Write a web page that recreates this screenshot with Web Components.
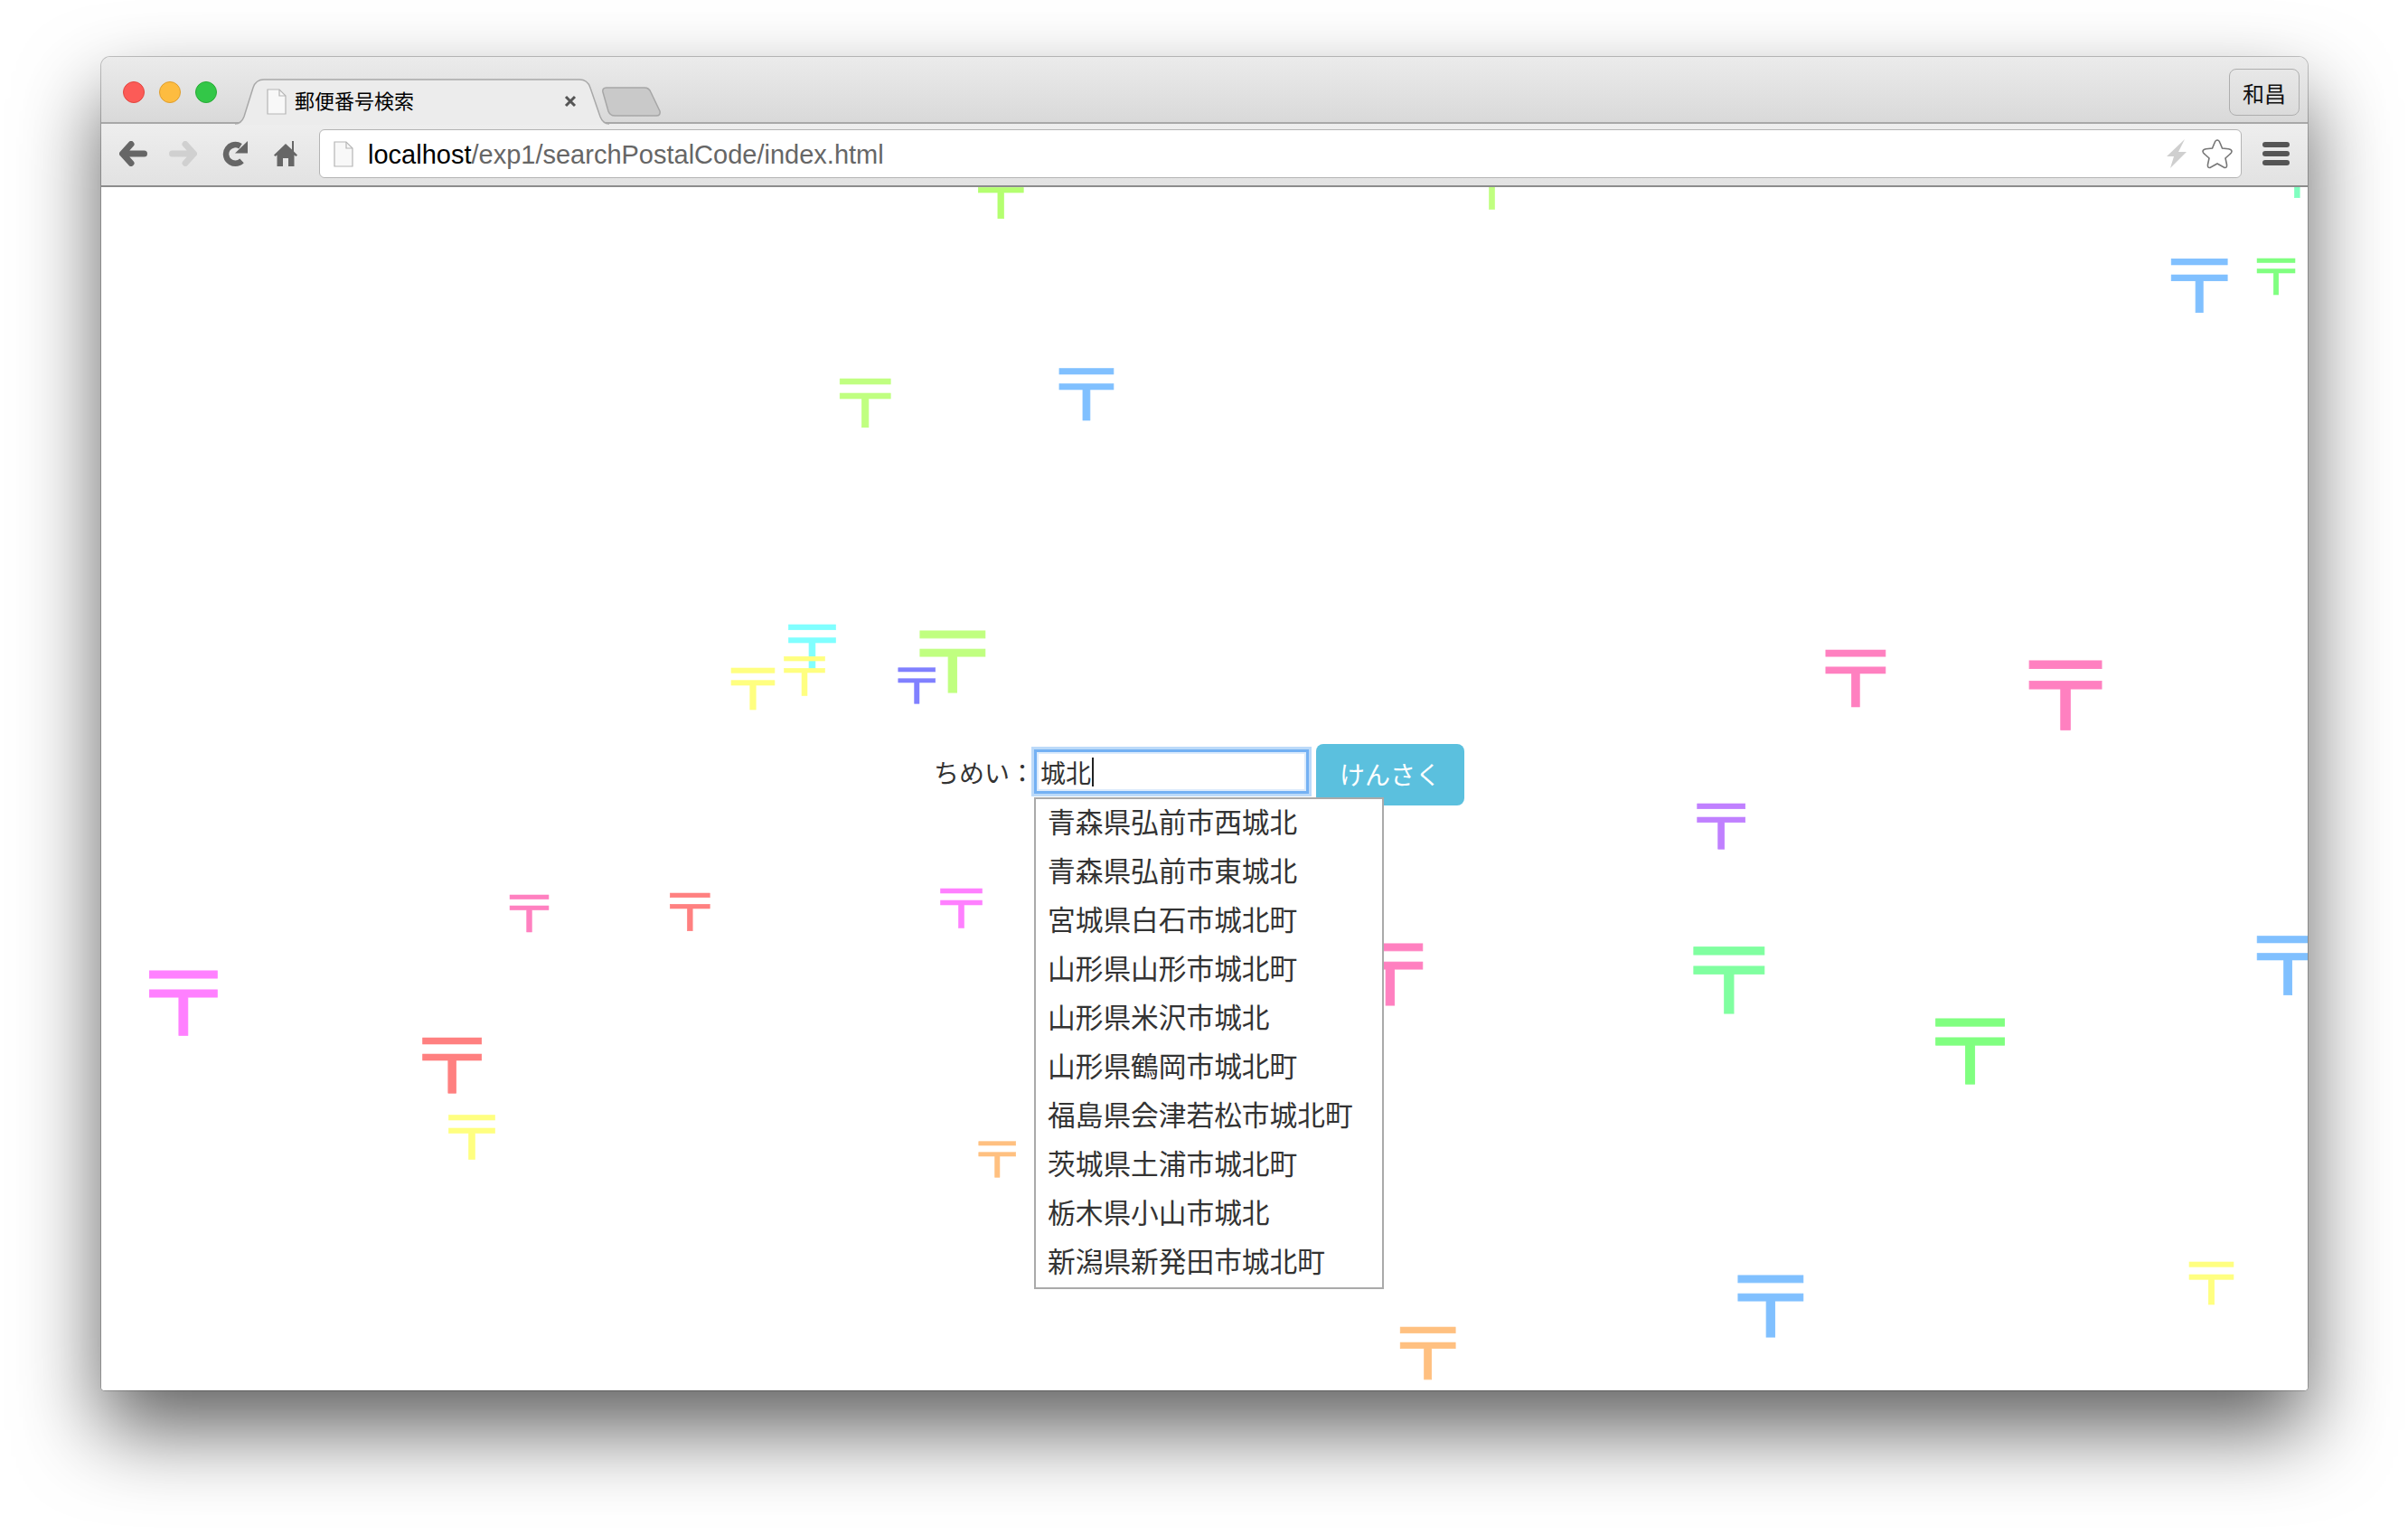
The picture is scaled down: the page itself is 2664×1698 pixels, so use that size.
<!DOCTYPE html>
<html lang="ja">
<head>
<meta charset="utf-8"/>
<title>郵便番号検索</title>
<style>
    html, body { margin: 0; background: #fff; }
    body { width: 2664px; height: 1698px; overflow: hidden; font-family: "Liberation Sans", "Noto Sans CJK JP", sans-serif; }
</style>
</head>
<body>
<browser-window>
    <window-tab slot="tab">郵便番号検索</window-tab>
    <address-bar slot="address"><b>localhost</b>/exp1/searchPostalCode/index.html</address-bar>
    <postal-field slot="marks"></postal-field>
    <search-form slot="content">
        <suggest-item>青森県弘前市西城北</suggest-item>
        <suggest-item>青森県弘前市東城北</suggest-item>
        <suggest-item>宮城県白石市城北町</suggest-item>
        <suggest-item>山形県山形市城北町</suggest-item>
        <suggest-item>山形県米沢市城北</suggest-item>
        <suggest-item>山形県鶴岡市城北町</suggest-item>
        <suggest-item>福島県会津若松市城北町</suggest-item>
        <suggest-item>茨城県土浦市城北町</suggest-item>
        <suggest-item>栃木県小山市城北</suggest-item>
        <suggest-item>新潟県新発田市城北町</suggest-item>
    </search-form>
</browser-window>

<script>
    const CJK = '"Noto Sans CJK JP", "Liberation Sans", sans-serif';

    class BrowserWindow extends HTMLElement {
        constructor() {
            super();
            const shadowDom = this.attachShadow({mode: 'open'});
            shadowDom.innerHTML = `
                <style>
                    :host {
                        display: flex;
                        flex-direction: column;
                        box-sizing: border-box;
                        width: 2441px;
                        height: 1475px;
                        margin: 63px 0 0 112px;
                        border-radius: 10px 10px 4px 4px;
                        box-shadow: 0 44px 90px rgba(0,0,0,.62), 0 0 0 1px rgba(0,0,0,.22);
                        background: #fff;
                        overflow: hidden;
                    }
                    .strip {
                        display: flex;
                        align-items: flex-start;
                        height: 74px;
                        flex: none;
                        box-sizing: border-box;
                        background: linear-gradient(#ebebeb, #d9d9d9);
                        border-bottom: 2px solid #a8a8a8;
                    }
                    .lights { display: flex; gap: 16px; padding: 27px 0 0 24px; width: 124px; box-sizing: content-box; flex: none; }
                    .lights i { width: 24px; height: 24px; border-radius: 50%; box-sizing: border-box; }
                    .red { background: #fc5b57; border: 1px solid #e2463f; }
                    .yellow { background: #fdbc40; border: 1px solid #df9e2d; }
                    .green { background: #33c748; border: 1px solid #28ab35; }
                    .newtab { margin: 33px 0 0 -8px; flex: none; display: block; }
                    .profile {
                        margin: 13px 9px 0 auto;
                        width: 78px;
                        height: 52px;
                        box-sizing: border-box;
                        border: 1.5px solid #aeaeae;
                        border-radius: 8px;
                        display: flex;
                        align-items: center;
                        justify-content: center;
                        font: 24px ${CJK};
                        color: #111;
                    }
                    .toolbar {
                        display: flex;
                        align-items: center;
                        height: 70px;
                        flex: none;
                        box-sizing: border-box;
                        background: linear-gradient(#eeeeee, #e2e2e2);
                        border-bottom: 2px solid #8c8c8c;
                        padding: 0 20px 2px 20px;
                    }
                    .toolbar svg { display: block; flex: none; }
                    .forward { margin-left: 24px; }
                    .reload { margin-left: 28px; }
                    .home { margin-left: 29px; }
                    .menu { margin-left: 23px; display: flex; flex-direction: column; gap: 4px; }
                    .menu i { width: 30px; height: 6px; border-radius: 3px; background: #555; display: block; }
                    .content { position: relative; flex: 1; overflow: hidden; background: #fff; }
                </style>
                <div class="strip">
                    <div class="lights"><i class="red"></i><i class="yellow"></i><i class="green"></i></div>
                    <slot name="tab"></slot>
                    <svg class="newtab" width="66" height="33" viewBox="0 0 66 33">
                        <path d="M1 6 Q0 1 5 1 H47 Q52 1 54 6 L64 27 Q65 32 60 32 H14 Q9 32 7 27 Z" fill="#c9c9c9" stroke="#a6a6a6" stroke-width="1.5"/>
                    </svg>
                    <div class="profile">和昌</div>
                </div>
                <div class="toolbar">
                    <svg width="31" height="28" viewBox="0 0 31 28"><path d="M13 3.5 L3.5 14 L13 24.5 M5 14 H27.5" fill="none" stroke="#666" stroke-width="7" stroke-linecap="round" stroke-linejoin="round"/></svg>
                    <svg class="forward" width="31" height="28" viewBox="0 0 31 28"><path d="M18 3.5 L27.5 14 L18 24.5 M26 14 H3.5" fill="none" stroke="#d0d0d0" stroke-width="7" stroke-linecap="round" stroke-linejoin="round"/></svg>
                    <svg class="reload" width="28" height="28" viewBox="0 0 28 28"><path d="M21.5 21.8 A10.3 10.3 0 1 1 20 5.8" fill="none" stroke="#666" stroke-width="6.5"/><path d="M14 13.5 L28 13.5 L28 0 Z" fill="#666"/></svg>
                    <svg class="home" width="26" height="28" viewBox="0 0 26 28"><path d="M13 3 L0 15.5 L1.5 17 L3.5 15.5 V28 H10 V19 H16 V28 H22.5 V15.5 L24.5 17 L26 15.5 L22 11.5 V0 H20 V9.5 Z" fill="#666"/></svg>
                    <slot name="address"></slot>
                    <div class="menu"><i></i><i></i><i></i></div>
                </div>
                <div class="content">
                    <slot name="marks"></slot>
                    <slot name="content"></slot>
                </div>
            `;
        }
    }
    window.customElements.define('browser-window', BrowserWindow);

    class WindowTab extends HTMLElement {
        constructor() {
            super();
            const shadowDom = this.attachShadow({mode: 'open'});
            shadowDom.innerHTML = `
                <style>
                    :host {
                        position: relative;
                        display: flex;
                        align-items: center;
                        flex: none;
                        box-sizing: border-box;
                        width: 414px;
                        height: 51px;
                        margin-top: 24px;
                        padding: 0 0 0 35px;
                        font: 22px ${CJK};
                        color: #000;
                    }
                    .shape { position: absolute; left: 0; top: 0; }
                    .doc { position: relative; margin-right: 9px; flex: none; }
                    .title { position: relative; flex: 1; margin-bottom: 6px; }
                    .close { position: relative; margin: 0 36px 2px 0; flex: none; }
                </style>
                <svg class="shape" width="414" height="51" viewBox="0 0 414 51">
                    <path d="M0 50 Q7 50 10 42 L20 10 Q23 1 32 1 H381 Q390 1 393 10 L404 42 Q407 50 414 50 V51 H0 Z" fill="#ececec"/>
                    <path d="M0 50 Q7 50 10 42 L20 10 Q23 1 32 1 H381 Q390 1 393 10 L404 42 Q407 50 414 50" fill="none" stroke="#a8a8a8" stroke-width="1.5"/>
                </svg>
                <svg class="doc" width="22" height="29" viewBox="0 0 22 29"><path d="M1 1 H14 L21 8 V28 H1 Z" fill="#f8f8f8" stroke="#b5b5b5" stroke-width="1.2"/><path d="M14 1 V8 H21" fill="none" stroke="#b5b5b5" stroke-width="1.2"/></svg>
                <span class="title"><slot></slot></span>
                <svg class="close" width="14" height="14" viewBox="0 0 14 14"><path d="M2 2 L12 12 M12 2 L2 12" stroke="#555" stroke-width="3"/></svg>
            `;
        }
    }
    window.customElements.define('window-tab', WindowTab);

    class AddressBar extends HTMLElement {
        constructor() {
            super();
            const shadowDom = this.attachShadow({mode: 'open'});
            shadowDom.innerHTML = `
                <style>
                    :host {
                        display: flex;
                        align-items: center;
                        flex: 1;
                        height: 54px;
                        margin-left: 24px;
                        box-sizing: border-box;
                        padding: 0 8px 0 15px;
                        background: #fff;
                        border: 1.5px solid #b4b4b4;
                        border-radius: 6px;
                        font: 29px "Liberation Sans", sans-serif;
                        color: #666;
                    }
                    svg { display: block; flex: none; }
                    .url { flex: 1; margin: 2px 0 0 16px; white-space: nowrap; }
                    ::slotted(b) { font-weight: normal; color: #000; }
                    .bolt { margin-right: 16px; }
                </style>
                <svg width="22" height="29" viewBox="0 0 22 29"><path d="M1 1 H14 L21 8 V28 H1 Z" fill="#f8f8f8" stroke="#b5b5b5" stroke-width="1.2"/><path d="M14 1 V8 H21" fill="none" stroke="#b5b5b5" stroke-width="1.2"/></svg>
                <span class="url"><slot></slot></span>
                <svg class="bolt" width="22" height="32" viewBox="0 0 22 32"><path d="M20 0 L0 19 H8 L4 32 L22 14 H13 Z" fill="#cfcfcf"/></svg>
                <svg width="36" height="34" viewBox="0 0 36 34"><path d="M18 2 Q20 2 21 5 L23.5 11 L30.5 11.8 Q34 12.5 34 14.5 Q34 16 32 17.5 L27 22 L28.5 29 Q29 33 26 32.5 L18 28 L10 32.5 Q7 33 7.5 29 L9 22 L4 17.5 Q2 16 2 14.5 Q2 12.5 5.5 11.8 L12.5 11 L15 5 Q16 2 18 2 Z" fill="#fff" stroke="#777" stroke-width="1.6"/></svg>
            `;
        }
    }
    window.customElements.define('address-bar', AddressBar);

    // one mark: cx, cy and w are the centre and width of the glyph, measured on the page
    class PostalMark extends HTMLElement {
        constructor() {
            super();
            const shadowDom = this.attachShadow({mode: 'open'});
            shadowDom.innerHTML = `
                <style>
                    :host {
                        position: absolute;
                        display: block;
                        width: 1em;
                        height: 1em;
                        line-height: 1;
                        text-align: center;
                        font-family: ${CJK};
                        font-weight: 400;
                        -webkit-text-stroke: .008em currentColor;
                        transform: scaleX(1.12);
                        filter: blur(.6px);
                    }
                </style>
                <slot></slot>
            `;
        }
        connectedCallback() {
            const size = this.getAttribute('w') * 1.33;
            this.style.fontSize = size + 'px';
            this.style.left = (this.getAttribute('cx') - size / 2) + 'px';
            this.style.top = (this.getAttribute('cy') - size * 0.58) + 'px';
            this.style.color = this.getAttribute('color');
            this.textContent = '〒';
        }
    }
    window.customElements.define('postal-mark', PostalMark);

    // positions in reference page pixels
    const MARKS = [
        [1107, 219, 50, '#b4ff70'],
        [1651, 210, 46, '#c0ff80'],
        [2541, 199, 44, '#80ffc0'],
        [2433, 317, 62, '#80c0ff'],
        [2518, 306, 42, '#80ff80'],
        [957, 447, 56, '#c0ff80'],
        [1202, 437, 60, '#80c0ff'],
        [899, 717, 52, '#80ffff'],
        [1054, 734, 72, '#c0ff80'],
        [833, 763, 48, '#ffff80'],
        [890, 750, 45, '#ffff80'],
        [1014, 760, 41, '#8080ff'],
        [2053, 751, 66, '#ff80c0'],
        [2285, 771, 80, '#ff80c0'],
        [1904, 915, 53, '#c080ff'],
        [586, 1011, 43, '#ff80c0'],
        [763, 1010, 44, '#ff8080'],
        [1064, 1005, 46, '#ff80ff'],
        [1538, 1080, 72, '#ff80c0'],
        [1913, 1086, 78, '#80ffa0'],
        [2531, 1069, 68, '#80c0ff'],
        [203, 1111, 75, '#ff80ff'],
        [500, 1180, 65, '#ff8080'],
        [2180, 1165, 76, '#80ff80'],
        [522, 1259, 51, '#ffff80'],
        [1103, 1284, 41, '#ffc080'],
        [1959, 1447, 72, '#80c0ff'],
        [2447, 1420, 49, '#ffff80'],
        [1580, 1497, 61, '#ffc080'],
    ];

    class PostalField extends HTMLElement {
        constructor() {
            super();
            const shadowDom = this.attachShadow({mode: 'open'});
            shadowDom.innerHTML = `
                <style>
                    :host { position: absolute; left: 0; top: 0; right: 0; bottom: 0; display: block; }
                </style>
            `;
            MARKS.forEach(m => {
                const mark = new PostalMark();
                mark.setAttribute('cx', m[0] - 112);
                mark.setAttribute('cy', m[1] - 207);
                mark.setAttribute('w', m[2]);
                mark.setAttribute('color', m[3]);
                shadowDom.appendChild(mark);
            });
        }
    }
    window.customElements.define('postal-field', PostalField);

    class SearchForm extends HTMLElement {
        constructor() {
            super();
            const shadowDom = this.attachShadow({mode: 'open'});
            shadowDom.innerHTML = `
                <style>
                    :host {
                        position: relative;
                        display: flex;
                        align-items: flex-start;
                        padding: 616px 0 0 921px;
                        height: 68px;
                        font: 28px ${CJK};
                        color: #333;
                    }
                    label { width: 111px; flex: none; white-space: nowrap; line-height: 62px; }
                    .wrap { position: relative; flex: none; margin-top: 6px; }
                    .input {
                        box-sizing: border-box;
                        width: 304px;
                        height: 49px;
                        border: 3px solid #74b1f3;
                        box-shadow: 0 0 0 3px #bcdaf9, inset 0 0 0 2px #dcebfc;
                        background: #fff;
                        padding-left: 4px;
                        display: flex;
                        align-items: center;
                        font-size: 28px;
                        color: #333;
                    }
                    .caret { width: 1.5px; height: 32px; background: #222; margin-left: 1px; }
                    button {
                        flex: none;
                        margin-left: 8px;
                        width: 164px;
                        height: 68px;
                        border: 0;
                        border-radius: 8px;
                        background: #5bc0de;
                        color: #fff;
                        font: 28px ${CJK};
                        padding: 0 0 2px;
                    }
                    .list {
                        position: absolute;
                        left: 0;
                        top: 53px;
                        width: 387px;
                        box-sizing: border-box;
                        background: #fff;
                        border: 2px solid #aaa;
                    }
                </style>
                <label>ちめい：</label>
                <div class="wrap">
                    <div class="input">城北<span class="caret"></span></div>
                    <div class="list"><slot></slot></div>
                </div>
                <button>けんさく</button>
            `;
        }
    }
    window.customElements.define('search-form', SearchForm);

    class SuggestItem extends HTMLElement {
        constructor() {
            super();
            const shadowDom = this.attachShadow({mode: 'open'});
            shadowDom.innerHTML = `
                <style>
                    :host {
                        display: flex;
                        align-items: center;
                        box-sizing: border-box;
                        height: 54px;
                        padding: 0 0 8px 13px;
                        font: 30.7px ${CJK};
                        color: #333;
                        white-space: nowrap;
                    }
                </style>
                <slot></slot>
            `;
        }
    }
    window.customElements.define('suggest-item', SuggestItem);
</script>
</body>
</html>
